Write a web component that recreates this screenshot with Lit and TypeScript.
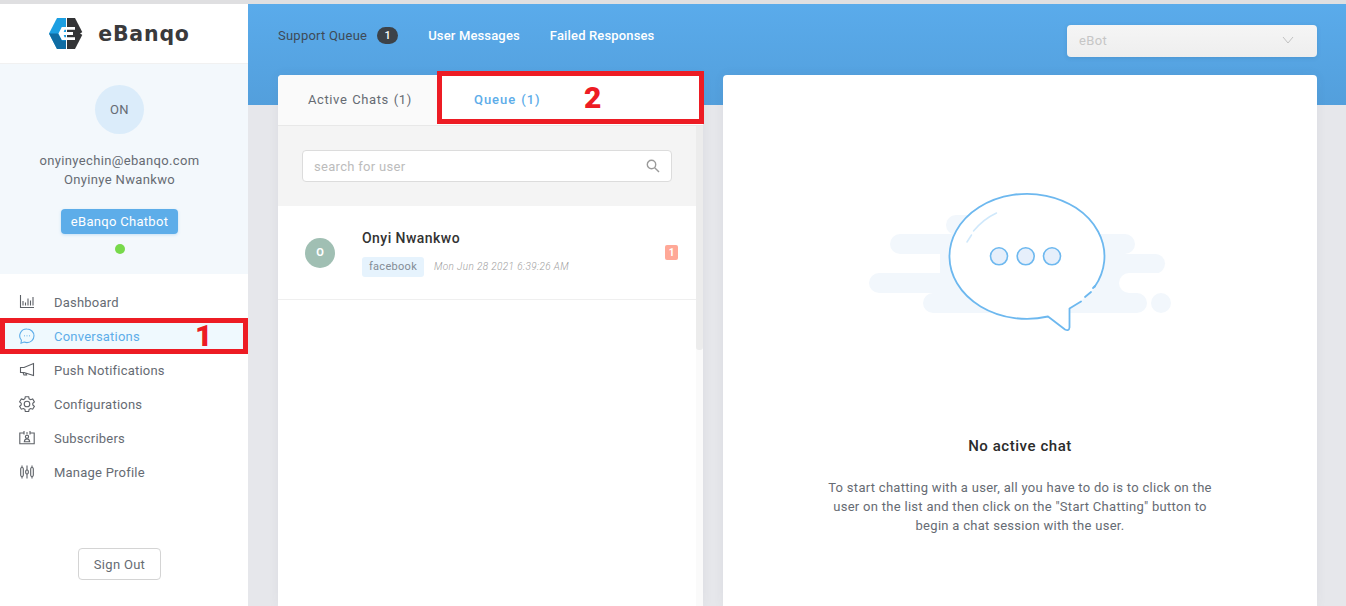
import { LitElement, css, html, svg } from 'lit';
import { customElement, state } from 'lit/decorators.js';

const navIcons = {
  dashboard: svg`<path d="M2.500 2v12.500h13.500M5 12.500V8M7.500 12.500V9.500M10 12.500V5.500M12.500 12.500V7.500M15 12.500V4"/>`,
  chat: svg`<path d="M9 2a7 6.800 0 0 1 0 13.600c-1 0-2-.2-2.900-.5L3 16.200l.4-3A6.800 6.800 0 0 1 9 2z"/><path d="M6 8.800h.6M8.700 8.800h.6M11.400 8.800h.6" stroke-width="1.400"/>`,
  push: svg`<path d="M15.500 2.500v12L6 11.500H2.500v-5H6zM5 11.500l1 2.500h2.500l-.7-1.700"/>`,
  gear: svg`<path d="M7.300 1.700h3.400l.4 2.100 1.500.9 2.100-.7 1.700 2.900-1.600 1.400v1.600l1.600 1.400-1.700 2.900-2.100-.7-1.500.9-.4 2.100H7.300l-.4-2.100-1.500-.9-2.100.7-1.700-2.900 1.600-1.400V8.200L1.600 6.800l1.700-2.900 2.100.7 1.500-.9z"/><circle cx="9" cy="9" r="2.800"/>`,
  subscribers: svg`<path d="M5.500 4H1.800v10.800h14.400V4h-3.700M6 2v3.500M12 2v3.500M8 4h2"/><circle cx="9" cy="7.700" r="1.600"/><path d="M6.300 12.800c.3-2.200 1.400-2.900 2.700-2.900s2.400.7 2.700 2.900z"/>`,
  profile: svg`<path d="M4 2.500v13M9 2.500v13M14 2.500v13"/><rect x="2.700" y="4.500" width="2.600" height="9" rx="1.200" fill="#fff"/><rect x="7.700" y="7" width="2.600" height="4" rx="1.200" fill="#fff"/><rect x="12.700" y="4.500" width="2.600" height="9" rx="1.200" fill="#fff"/>`,
};

type NavKey = keyof typeof navIcons;

const navItems: { label: string; icon: NavKey }[] = [
  { label: 'Dashboard', icon: 'dashboard' },
  { label: 'Conversations', icon: 'chat' },
  { label: 'Push Notifications', icon: 'push' },
  { label: 'Configurations', icon: 'gear' },
  { label: 'Subscribers', icon: 'subscribers' },
  { label: 'Manage Profile', icon: 'profile' },
];

@customElement('app-root')
export class AppRoot extends LitElement {
  @state() active = 'Conversations';

  static styles = css`
    :host {
      display: block;
      position: relative;
      height: 606px;
      overflow: hidden;
      font-family: Roboto, "Liberation Sans", sans-serif;
      font-size: 13px;
      color: #666b73;
      background: #fff;
    }
    * { box-sizing: border-box; }
    .shell {
      display: flex;
      height: 606px;
      border-top: 4px solid #dfdfe1;
    }
    .sidebar {
      width: 248px;
      flex: none;
      display: flex;
      flex-direction: column;
      background: #fff;
    }
    .brand {
      height: 60px;
      display: flex;
      align-items: center;
      justify-content: center;
      gap: 15px;
      border-bottom: 1px solid #f1f1f1;
      padding-right: 9px;
    }
    .wordmark {
      font-family: "DejaVu Sans", sans-serif;
      font-weight: 700;
      font-size: 20.5px;
      color: #3a3a3c;
      letter-spacing: 0.8px;
    }
    .profile {
      height: 210px;
      background: #f3f8fc;
      display: flex;
      flex-direction: column;
      align-items: center;
      padding: 21px 9px 0 0;
    }
    .avatar {
      width: 49px;
      height: 49px;
      border-radius: 50%;
      background: #dbecfa;
      display: flex;
      align-items: center;
      justify-content: center;
      font-size: 13px;
      letter-spacing: 0.4px;
      color: #666b73;
    }
    .email { margin-top: 17px; line-height: 19px; letter-spacing: 0.35px; }
    .name { line-height: 19px; letter-spacing: 0.35px; }
    .bot {
      margin-top: 20px;
      height: 25px;
      width: 117px;
      border-radius: 4px;
      background: #5dade9;
      color: #fff;
      display: flex;
      align-items: center;
      justify-content: center;
      letter-spacing: 0.3px;
      box-shadow: 0 1px 3px rgba(93, 173, 233, 0.3);
    }
    .dot {
      margin-top: 10px;
      width: 10px;
      height: 10px;
      border-radius: 50%;
      background: #77d94a;
    }
    nav {
      margin-top: 11px;
      display: flex;
      flex-direction: column;
    }
    .nav-item {
      height: 34px;
      display: flex;
      align-items: center;
      padding-left: 18px;
      gap: 18px;
      letter-spacing: 0.22px;
    }
    .nav-item svg {
      width: 18px;
      height: 18px;
      flex: none;
      fill: none;
      stroke: #5c6066;
      stroke-width: 1.1;
    }
    .nav-item.active {
      background: #eff9fe;
      color: #5dade9;
    }
    .nav-item.active svg { stroke: #5dade9; }
    .signout {
      margin: 59px 0 0 78px;
      width: 83px;
      height: 32px;
      border: 1px solid #d4d4d4;
      border-radius: 4px;
      display: flex;
      align-items: center;
      justify-content: center;
      letter-spacing: 0.3px;
    }
    .main {
      flex: 1;
      min-width: 0;
      display: flex;
      flex-direction: column;
      background: linear-gradient(#5aabeb, #539fdc) no-repeat top / 100% 101px, #e6e7eb;
      padding: 0 29px 0 30px;
    }
    .top {
      height: 71px;
      display: flex;
      align-items: flex-start;
      justify-content: space-between;
      flex: none;
    }
    .links {
      display: flex;
      align-items: center;
      height: 25px;
      margin-top: 19px;
      gap: 30px;
      color: #fff;
      letter-spacing: 0.15px;
      font-weight: 500;
    }
    .link-active {
      display: flex;
      align-items: center;
      gap: 10px;
      color: #3e4a57;
      font-weight: 400;
      letter-spacing: 0.23px;
    }
    .count {
      width: 21px;
      height: 17px;
      border-radius: 9px;
      background: #3c4248;
      color: #fff;
      font-size: 11px;
      font-weight: 500;
      display: flex;
      align-items: center;
      justify-content: center;
    }
    .select {
      margin-top: 21px;
      width: 250px;
      height: 32px;
      border-radius: 4px;
      background: linear-gradient(#f5f5f5, #eeeeee);
      box-shadow: 0 1px 4px rgba(40, 90, 140, 0.2);
      color: #c6c6c6;
      display: flex;
      align-items: center;
      justify-content: space-between;
      padding: 0 23px 2px 12px;
      letter-spacing: 0.4px;
    }
    .select svg { width: 12px; height: 8px; fill: none; stroke: #c2c2c2; stroke-width: 1; }
    .panes {
      flex: 1;
      min-height: 0;
      display: flex;
      gap: 20px;
    }
    .queue, .detail {
      background: #fff;
      border-radius: 4px 4px 0 0;
      box-shadow: 0 0 12px rgba(60, 70, 90, 0.06);
    }
    .queue {
      width: 425px;
      flex: none;
      display: flex;
      flex-direction: column;
    }
    .tabs {
      height: 51px;
      flex: none;
      display: flex;
      border-bottom: 1px solid #e8e8e8;
      letter-spacing: 0.6px;
    }
    .tab {
      display: flex;
      align-items: center;
      background: #fafafa;
      border-radius: 4px 0 0 0;
      width: 159px;
      padding: 0 0 2px 30px;
      word-spacing: 1px;
    }
    .tab.on {
      flex: 1;
      background: #fff;
      color: #5dade9;
      font-weight: 500;
      padding-left: 37px;
      border-radius: 0 4px 0 0;
      letter-spacing: 0.95px;
    }
    .body { flex: 1; display: flex; min-height: 0; }
    .list { flex: 1; min-width: 0; }
    .scroll {
      width: 7px;
      flex: none;
      background: #fafafa;
    }
    .thumb {
      height: 224px;
      background: #ececec;
      border-radius: 0 0 3px 3px;
    }
    .search-wrap {
      height: 80px;
      background: #f4f4f4;
      padding: 24px 24px 0;
    }
    .search {
      height: 32px;
      border: 1px solid #dcdcdc;
      border-radius: 4px;
      background: #fff;
      display: flex;
      align-items: center;
      justify-content: space-between;
      padding: 0 11px;
      color: #bcbcbc;
      letter-spacing: 0.3px;
    }
    .search svg { width: 14px; height: 14px; fill: none; stroke: #9a9a9a; stroke-width: 1.4; }
    .row {
      height: 94px;
      border-bottom: 1px solid #efefef;
      display: flex;
      align-items: center;
      padding: 0 18px 0 27px;
    }
    .initial {
      width: 30px;
      height: 30px;
      flex: none;
      border-radius: 50%;
      background: #a0bfb3;
      color: #fff;
      font-size: 11px;
      font-weight: 700;
      display: flex;
      align-items: center;
      justify-content: center;
    }
    .info { margin-left: 27px; flex: 1; padding-top: 1px; }
    .who {
      font-size: 14px;
      font-weight: 500;
      color: #333;
      letter-spacing: 0.45px;
      line-height: 17px;
    }
    .meta { display: flex; align-items: center; margin-top: 10px; gap: 10px; }
    .tag {
      width: 62px;
      height: 20px;
      border-radius: 3px;
      background: #e6f3fd;
      color: #838c96;
      font-size: 11px;
      letter-spacing: 0.3px;
      display: flex;
      align-items: center;
      justify-content: center;
    }
    .when {
      font-size: 10px;
      font-style: italic;
      font-weight: 300;
      color: #a0a0a0;
      letter-spacing: 0.38px;
    }
    .unread {
      width: 13px;
      height: 15px;
      border-radius: 2px;
      background: #ffa897;
      color: #fff;
      font-size: 10px;
      font-weight: 700;
      display: flex;
      align-items: center;
      justify-content: center;
    }
    .detail {
      flex: 1;
      display: flex;
      flex-direction: column;
      align-items: center;
      padding-top: 95px;
    }
    .detail svg { width: 340px; height: 180px; flex: none; }
    .detail h3 {
      margin: 86px 0 0;
      font-size: 15px;
      font-weight: 500;
      line-height: 20px;
      color: #2b2b2b;
      letter-spacing: 0.55px;
    }
    .detail p {
      margin: 22px 0 0;
      width: 400px;
      text-align: center;
      line-height: 19px;
      letter-spacing: 0.29px;
    }
    .mark {
      position: absolute;
      border: 5px solid #ed1c24;
    }
    .mark-nav { left: 0; top: 318px; width: 248px; height: 36px; }
    .mark-tab { left: 437px; top: 71px; width: 267px; height: 53px; }
    .digit {
      position: absolute;
      font-family: Roboto, sans-serif;
      font-weight: 900;
      font-size: 30px;
      line-height: 30px;
      color: #ed1c24;
    }
    .digit-nav { left: 195px; top: 321px; }
    .digit-tab { left: 584px; top: 83px; }
  `;

  private bubble() {
    return html`<svg viewBox="0 0 340 180">
      <g fill="#f2f7fc">
        <rect x="40" y="64" width="245" height="20" rx="10"/>
        <rect x="96" y="45" width="60" height="20" rx="10"/>
        <rect x="90" y="84" width="40" height="20"/>
        <rect x="19" y="103" width="200" height="20" rx="10"/>
        <rect x="73" y="123" width="224" height="20" rx="10"/>
        <rect x="230" y="84" width="85" height="19.500" rx="9.700"/>
        <rect x="230" y="100" width="50" height="26"/>
        <circle cx="311" cy="133" r="10"/>
      </g>
      <rect x="269" y="103" width="60" height="20" rx="10" fill="#fff"/>
      <ellipse cx="177" cy="86" rx="77.500" ry="62.500" fill="#fff"/>
      <path d="M198 147l17 12.500q4 2 4.500-2V138.500" fill="#fff"/>
      <g fill="none" stroke="#6db8ef" stroke-width="1.800" stroke-linecap="round" stroke-linejoin="round">
        <path d="M244.500 117A77.500 62.500 0 1 0 198 146.500l17 13q4 2 4.500-2V138.500l11.500-7"/>
        <path d="M235 127l6-5M243 118l2-2"/>
      </g>
      <g fill="#e6effb" stroke="#6db8ef" stroke-width="1.600">
        <circle cx="149" cy="86.300" r="8.500"/>
        <circle cx="175.700" cy="86.300" r="8.500"/>
        <circle cx="202" cy="86.300" r="8.500"/>
      </g>
      <path d="M123.500 61q10-12 23-18M117 72l4.500-7" fill="none" stroke="#cfe8fb" stroke-width="1.500" stroke-linecap="round"/>
    </svg>`;
  }

  render() {
    return html`
      <div class="shell">
        <aside class="sidebar">
          <div class="brand">
            <svg width="34" height="31" viewBox="0 0 34 31">
              <path d="M8 0h9v31H8L0 15.500z" fill="#1c9fe2"/>
              <path d="M0 15.500h9l4 7h4V31H8z" fill="#0f6ca3"/>
              <path d="M18 0h8l8 15.500L26 31h-8z" fill="#333436"/>
              <path d="M9.500 15.500l3.300-6.500H26v2.800H15.500l-.8 2.300H24v2.800h-9.300l.8 2.300H26V22H12.800z" fill="#fff"/>
              <path d="M31 15.500l3-1.800v3.600z" fill="#fff"/>
            </svg>
            <span class="wordmark">eBanqo</span>
          </div>
          <section class="profile">
            <div class="avatar">ON</div>
            <div class="email">onyinyechin@ebanqo.com</div>
            <div class="name">Onyinye Nwankwo</div>
            <div class="bot">eBanqo Chatbot</div>
            <div class="dot"></div>
          </section>
          <nav>
            ${navItems.map(
              item => html`<div class="nav-item ${item.label === this.active ? 'active' : ''}">
                <svg viewBox="0 0 18 18">${navIcons[item.icon]}</svg>${item.label}
              </div>`
            )}
          </nav>
          <div class="signout">Sign Out</div>
        </aside>
        <main class="main">
          <div class="top">
            <div class="links">
              <span class="link-active">Support Queue <span class="count">1</span></span>
              <span>User Messages</span>
              <span>Failed Responses</span>
            </div>
            <div class="select">
              eBot
              <svg viewBox="0 0 12 8"><path d="M1 1l5 6 5-6"/></svg>
            </div>
          </div>
          <div class="panes">
            <section class="queue">
              <div class="tabs">
                <div class="tab">Active Chats (1)</div>
                <div class="tab on">Queue (1)</div>
              </div>
              <div class="body">
                <div class="list">
                  <div class="search-wrap">
                    <div class="search">
                      search for user
                      <svg viewBox="0 0 14 14"><circle cx="5.500" cy="5.500" r="4.200"/><path d="M8.700 8.700l4.300 4.300"/></svg>
                    </div>
                  </div>
                  <div class="row">
                    <div class="initial">O</div>
                    <div class="info">
                      <div class="who">Onyi Nwankwo</div>
                      <div class="meta">
                        <span class="tag">facebook</span>
                        <span class="when">Mon Jun 28 2021 6:39:26 AM</span>
                      </div>
                    </div>
                    <div class="unread">1</div>
                  </div>
                </div>
                <div class="scroll"><div class="thumb"></div></div>
              </div>
            </section>
            <section class="detail">
              ${this.bubble()}
              <h3>No active chat</h3>
              <p>To start chatting with a user, all you have to do is to click on the user on the list and then click on the "Start Chatting" button to begin a chat session with the user.</p>
            </section>
          </div>
        </main>
      </div>
      <div class="mark mark-nav"></div>
      <div class="digit digit-nav">1</div>
      <div class="mark mark-tab"></div>
      <div class="digit digit-tab">2</div>
    `;
  }
}
